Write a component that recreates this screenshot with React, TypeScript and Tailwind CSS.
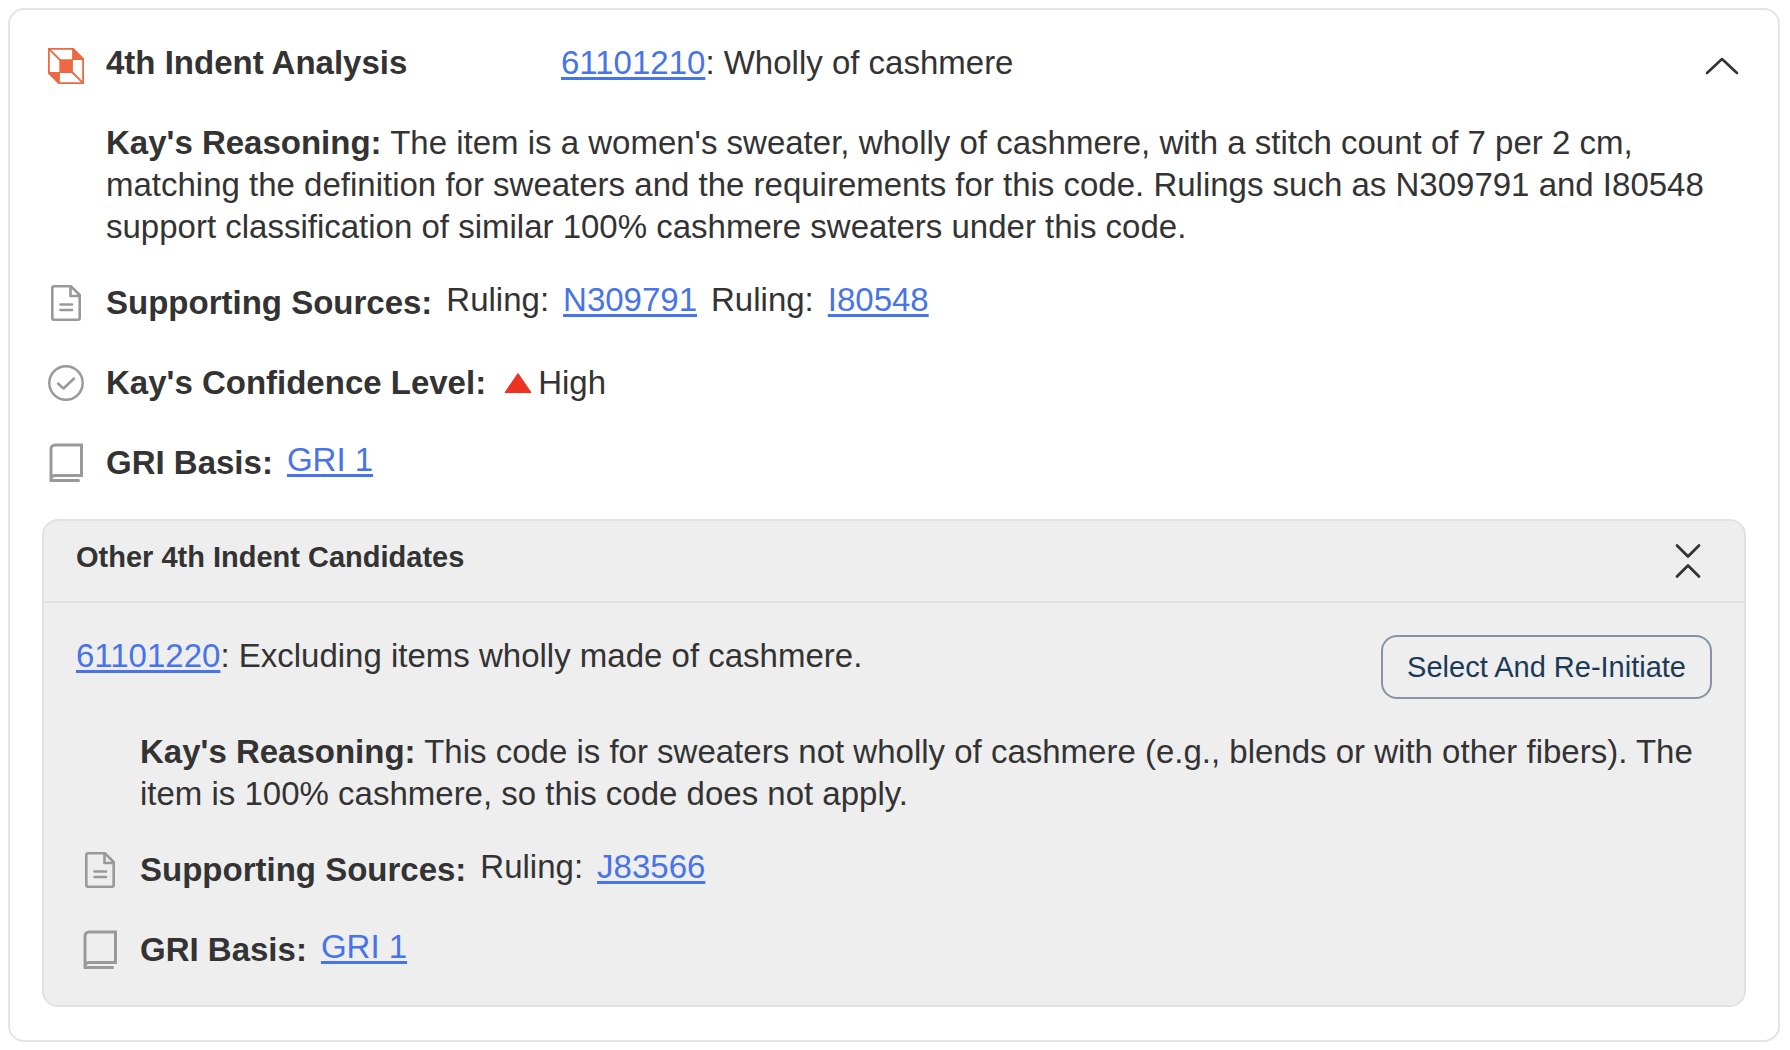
import React, { useState } from "react";

function CubeIcon() {
  return (
    <svg viewBox="0 0 36 36" className="size-9 shrink-0 text-[#ee6844]" fill="none" stroke="currentColor" strokeWidth="1.8" aria-hidden="true">
      <path d="M.9.9H25L35.1 11V35.1H11L.9 25Z" />
      <path d="M.9.9 12 12M24 24 35.1 35.1" />
      <path d="M12.200 12.200H24V24H12.200ZM25 .9 35.1 11.200H25ZM.9 25H11V35.1Z" fill="currentColor" />
    </svg>
  );
}

function DocumentIcon() {
  return (
    <svg viewBox="0 0 36 36" className="size-9 shrink-0 text-[#999]" fill="none" stroke="currentColor" strokeWidth="2.6" strokeLinejoin="round" strokeLinecap="round" aria-hidden="true">
      <path d="M6 1.300H23L31.700 10V33a1.700 1.700 0 0 1-1.700 1.700H6a1.700 1.700 0 0 1-1.700-1.700V3a1.700 1.700 0 0 1 1.700-1.700Z" />
      <path d="M22.500 1.300V11H31.700M12.500 19.500H24M12.500 25H24" />
    </svg>
  );
}

function CheckIcon() {
  return (
    <svg viewBox="0 0 36 36" className="size-9 shrink-0 text-[#999]" fill="none" stroke="currentColor" strokeWidth="2.5" strokeLinejoin="round" strokeLinecap="round" aria-hidden="true">
      <circle cx="18" cy="18" r="16.700" />
      <path d="M10 18.500 15.500 23.500 26 13.500" />
    </svg>
  );
}

function BookIcon() {
  return (
    <svg viewBox="0 0 36 40" className="h-10 w-9 shrink-0 text-[#999]" fill="none" stroke="currentColor" strokeWidth="3" strokeLinecap="round" aria-hidden="true">
      <path d="M3 37.500V6a4 4 0 0 1 4-4H33.500V32.500H7a4 4 0 0 0-4 5H30.500" />
    </svg>
  );
}

function CodeLink({ children }: { children: React.ReactNode }) {
  return (
    <a href="#" className="text-[#4774e8] underline decoration-[3px] underline-offset-[3px] [text-decoration-skip-ink:none]">
      {children}
    </a>
  );
}

function Row({ icon, label, children }: { icon: React.ReactNode; label: string; children: React.ReactNode }) {
  return (
    <div className="flex h-[50px] items-center">
      <div className="mr-[22px] flex w-9 justify-center">{icon}</div>
      <div className="mr-3.5 font-bold">{label}</div>
      {children}
    </div>
  );
}

export default function App() {
  const [open, setOpen] = useState(true);
  const [others, setOthers] = useState(true);

  return (
    <main className="min-h-screen bg-white py-2 pr-2.5 pl-2 font-['Liberation_Sans',Arial,sans-serif] text-[33px] leading-[42px] text-[#333]">
      <section className="rounded-2xl border-2 border-[#e4e4e4] px-8 pt-8 pb-[33px]">
        <header className="flex items-start px-1.5">
          <div className="flex w-[513px] shrink-0 items-start gap-[22px]">
            <div className="pt-1.5"><CubeIcon /></div>
            <h2 className="font-bold">4th Indent Analysis</h2>
          </div>
          <p className="grow"><CodeLink>61101210</CodeLink>: Wholly of cashmere</p>
          <button type="button" aria-label="Toggle analysis" aria-expanded={open} onClick={() => setOpen(!open)} className="flex h-12 w-9 items-center justify-center">
            <svg viewBox="0 0 36 20" className="h-5 w-9" fill="none" stroke="#333" strokeWidth="2.6" strokeLinecap="round" strokeLinejoin="round">
              <path d="M3 17 18 3 33 17" />
            </svg>
          </button>
        </header>

        {open && (
          <>
            <p className="mt-8 pr-8 pl-16"><strong>Kay's Reasoning:</strong> The item is a women's sweater, wholly of cashmere, with a stitch count of 7 per 2 cm, matching the definition for sweaters and the requirements for this code. Rulings such as N309791 and I80548 support classification of similar 100% cashmere sweaters under this code.</p>

            <div className="mt-[30px] flex flex-col gap-[30px] px-1.5">
              <Row icon={<DocumentIcon />} label="Supporting Sources:">
                <div className="flex gap-3.5 pb-1.5">
                  <span>Ruling:</span><CodeLink>N309791</CodeLink>
                  <span>Ruling:</span><CodeLink>I80548</CodeLink>
                </div>
              </Row>
              <Row icon={<CheckIcon />} label="Kay's Confidence Level:">
                <div className="flex items-center gap-1.5 pl-1">
                  <svg viewBox="0 0 28 22" className="h-[22px] w-7" aria-hidden="true">
                    <path d="M14 1.500 27 20.500H1Z" fill="#ec3323" stroke="#ec3323" strokeLinejoin="round" />
                  </svg>
                  <span>High</span>
                </div>
              </Row>
              <Row icon={<BookIcon />} label="GRI Basis:">
                <div className="pb-1.5"><CodeLink>GRI 1</CodeLink></div>
              </Row>
            </div>

            <section className="mt-[31px] rounded-2xl border-2 border-[#e2e2e2] bg-[#eee]">
              <header className="flex h-[82px] items-center justify-between border-b-2 border-[#e2e2e2] px-8">
                <h3 className="pb-2 text-[29px] leading-9 font-bold">Other 4th Indent Candidates</h3>
                <button type="button" aria-label="Toggle other candidates" aria-expanded={others} onClick={() => setOthers(!others)} className="mr-2.5 flex h-12 w-7 items-center justify-center">
                  <svg viewBox="0 0 28 36" className="h-9 w-7" fill="none" stroke="#333" strokeWidth="2.8" strokeLinecap="round" strokeLinejoin="round">
                    <path d="M3 2.500 14 13.500 25 2.500M3 33.500 14 22.500 25 33.500" />
                  </svg>
                </button>
              </header>
              {others && (
                <div className="px-8 pt-8 pb-[30px]">
                  <div className="flex items-start justify-between">
                    <p><CodeLink>61101220</CodeLink>: Excluding items wholly made of cashmere.</p>
                    <button type="button" className="h-16 rounded-2xl border-2 border-[#8494a2] px-6 text-[29px] leading-9 text-[#1b3a57]">Select And Re-Initiate</button>
                  </div>
                  <p className="mt-8 pl-16"><strong>Kay's Reasoning:</strong> This code is for sweaters not wholly of cashmere (e.g., blends or with other fibers). The item is 100% cashmere, so this code does not apply.</p>
                  <div className="mt-[30px] flex flex-col gap-[30px] pl-1.5">
                    <Row icon={<DocumentIcon />} label="Supporting Sources:">
                      <div className="flex gap-3.5 pb-1.5"><span>Ruling:</span><CodeLink>J83566</CodeLink></div>
                    </Row>
                    <Row icon={<BookIcon />} label="GRI Basis:">
                      <div className="pb-1.5"><CodeLink>GRI 1</CodeLink></div>
                    </Row>
                  </div>
                </div>
              )}
            </section>
          </>
        )}
      </section>
    </main>
  );
}
